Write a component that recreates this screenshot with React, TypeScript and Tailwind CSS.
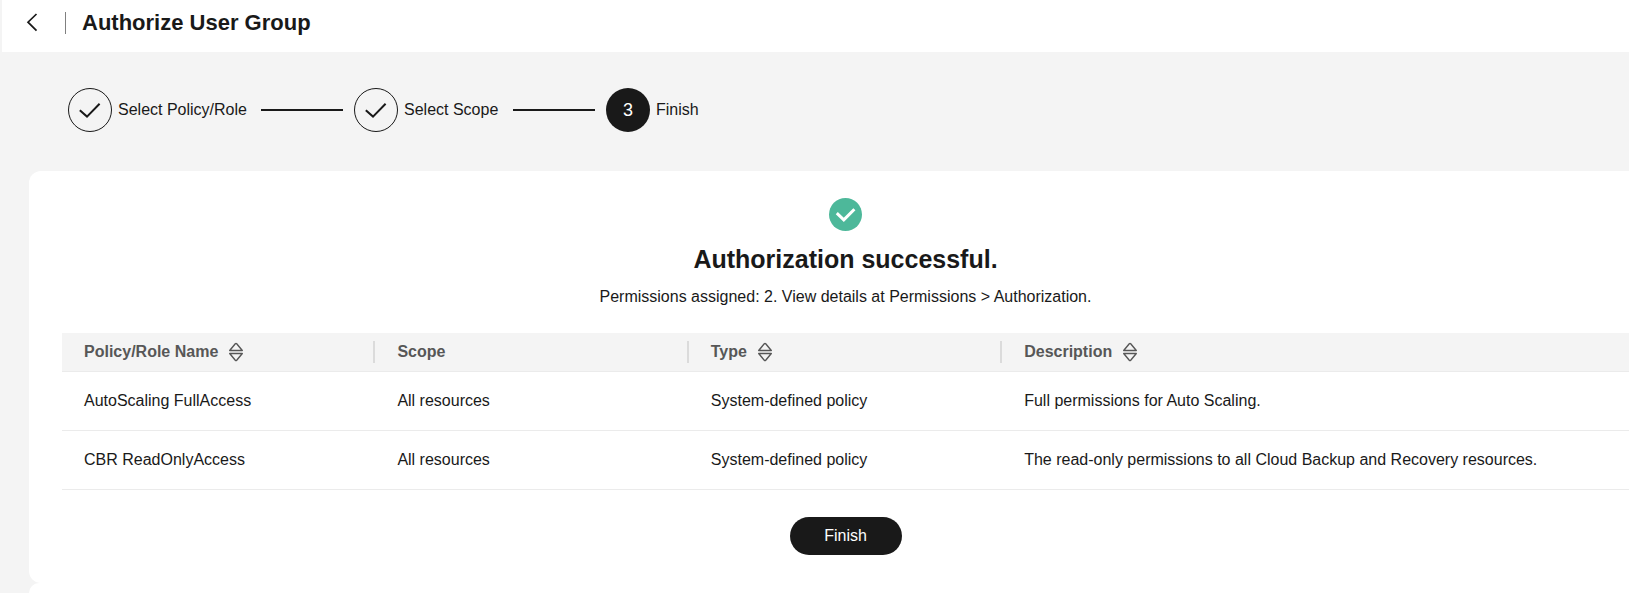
type Permission = {
  name: string;
  scope: string;
  type: string;
  description: string;
};

const permissions: Permission[] = [
  {
    name: "AutoScaling FullAccess",
    scope: "All resources",
    type: "System-defined policy",
    description: "Full permissions for Auto Scaling.",
  },
  {
    name: "CBR ReadOnlyAccess",
    scope: "All resources",
    type: "System-defined policy",
    description: "The read-only permissions to all Cloud Backup and Recovery resources.",
  },
];

const columns = [
  { label: "Policy/Role Name", sortable: true, width: "w-1/5" },
  { label: "Scope", sortable: false, width: "w-1/5" },
  { label: "Type", sortable: true, width: "w-1/5" },
  { label: "Description", sortable: true, width: "w-2/5" },
];

const steps = [
  { label: "Select Policy/Role", done: true, width: "w-[286px]" },
  { label: "Select Scope", done: true, width: "w-[252px]" },
  { label: "Finish", done: false, width: "" },
];

function SortIcon() {
  return (
    <svg width="16" height="20" viewBox="0 0 16 20" fill="none" stroke="currentColor" strokeWidth="1.4" strokeLinejoin="round" aria-hidden="true">
      <path d="M7.3 1.7Q8 1 8.7 1.7L14.3 8.5H1.7z" />
      <path d="M7.3 18.3Q8 19 8.7 18.3L14.3 11.5H1.7z" />
    </svg>
  );
}

function StepMarker({ index, done }: { index: number; done: boolean }) {
  if (!done) {
    return (
      <span className="flex size-11 shrink-0 items-center justify-center rounded-full bg-[#191919] text-lg text-white">
        {index + 1}
      </span>
    );
  }
  return (
    <span className="flex size-11 shrink-0 items-center justify-center rounded-full border border-[#191919]">
      <svg width="24" height="24" viewBox="0 0 24 24" fill="none" stroke="#191919" strokeWidth="2" aria-hidden="true">
        <path d="M1.8 12.2 9 18.6 21.6 5.8" />
      </svg>
    </span>
  );
}

function Steps() {
  return (
    <ol className="flex items-center pt-9 pb-[39px] pl-[68px]">
      {steps.map((step, index) => (
        <li key={step.label} className={`flex items-center pr-[11px] ${step.width}`}>
          <StepMarker index={index} done={step.done} />
          <span className="ml-1.5 whitespace-nowrap">{step.label}</span>
          {index < steps.length - 1 && <span className="ml-auto h-0.5 w-[82px] bg-[#191919]" />}
        </li>
      ))}
    </ol>
  );
}

function PermissionTable() {
  return (
    <table className="mt-6 w-full table-fixed border-separate border-spacing-0 text-left">
      <thead className="bg-[#f4f4f4] text-[#575757]">
        <tr>
          {columns.map((column, index) => (
            <th key={column.label} scope="col" className={`h-[39px] border-b border-[#ebebeb] p-0 font-bold ${column.width}`}>
              <div
                className={`flex h-[22px] items-center pl-[22px] ${
                  index < columns.length - 1 ? "border-r-2 border-[#dbdbdb]" : ""
                }`}
              >
                {column.label}
                {column.sortable && (
                  <button type="button" aria-label={`Sort by ${column.label}`} className="ml-2.5">
                    <SortIcon />
                  </button>
                )}
              </div>
            </th>
          ))}
        </tr>
      </thead>
      <tbody>
        {permissions.map((permission) => (
          <tr key={permission.name}>
            {[permission.name, permission.scope, permission.type, permission.description].map((value, index) => (
              <td key={index} className="h-[59px] border-b border-[#ebebeb] py-0 pr-2 pl-[22px]">
                {value}
              </td>
            ))}
          </tr>
        ))}
      </tbody>
    </table>
  );
}

export default function App() {
  return (
    <div className="flex min-h-screen flex-col bg-[#f4f4f4] font-['Liberation_Sans',Arial,sans-serif] text-base text-[#191919]">
      <header className="ml-0.5 flex h-[52px] items-center bg-white pb-1.5 pl-6">
        <button type="button" aria-label="Back">
          <svg width="14" height="20" viewBox="0 0 14 20" fill="none" stroke="#191919" strokeWidth="1.7" aria-hidden="true">
            <path d="M10.5 1 2 9.2l8.5 8.5" />
          </svg>
        </button>
        <span className="ml-[25px] h-[22px] w-px bg-[#808080]" />
        <h1 className="ml-4 text-[22px] leading-7 font-bold">Authorize User Group</h1>
      </header>

      <Steps />

      <main className="ml-[29px] flex flex-col items-center rounded-l-xl bg-white pt-[27px] pb-7 pl-[33px]">
        <svg width="33" height="33" viewBox="0 0 33 33" aria-hidden="true">
          <circle cx="16.5" cy="16.5" r="16.5" fill="#4db89a" />
          <path d="M7.8 15.2 14.8 21.8 25.4 11.2" fill="none" stroke="#fff" strokeWidth="3" />
        </svg>
        <h2 className="mt-3 text-[25px] leading-8 font-bold">Authorization successful.</h2>
        <p className="mt-2.5 leading-6">
          Permissions assigned: 2. View details at Permissions &gt; Authorization.
        </p>
        <PermissionTable />
        <button type="button" className="mt-[27px] h-[38px] w-28 rounded-full bg-[#191919] text-white">
          Finish
        </button>
      </main>
      <div className="ml-[29px] flex-1 rounded-tl-xl bg-white" />
    </div>
  );
}
